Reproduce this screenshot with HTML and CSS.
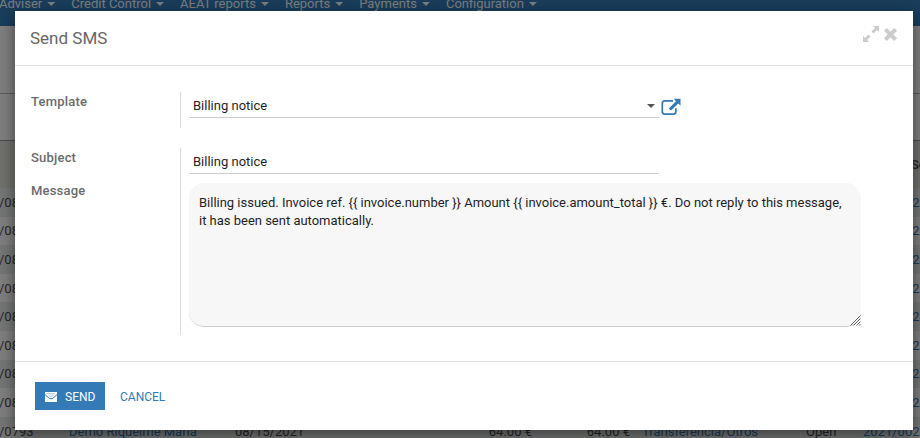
FILE: index.html
```html
<!DOCTYPE html>
<html lang="en">
<head>
<meta charset="utf-8">
<title>Send SMS</title>
<link rel="stylesheet" href="styles.css">
</head>
<body>
<div class="page">
  <nav class="navbar">
    <a>Adviser</a><a>Credit Control</a><a>AEAT reports</a><a>Reports</a><a>Payments</a><a>Configuration</a>
  </nav>
  <div class="control-panel"></div>
  <div class="filters"></div>
  <div class="list">
    <div class="row head"><span class="source">Se</span></div>
    <div class="row"><span>/08</span><span class="number">2021/002</span></div>
    <div class="row"><span>/08</span><span class="number">2021/002</span></div>
    <div class="row"><span>/08</span><span class="number">2021/002</span></div>
    <div class="row"><span>/08</span><span class="number">2021/002</span></div>
    <div class="row"><span>/08</span><span class="number">2021/002</span></div>
    <div class="row"><span>/08</span><span class="number">2021/002</span></div>
    <div class="row"><span>/08</span><span class="number">2021/002</span></div>
    <div class="row"><span>/08</span><span class="number">2021/002</span></div>
    <div class="row"><span>/0793</span><span class="partner">Demo Riquelme María</span><span class="date">08/15/2021</span><span class="amount">64.00 €</span><span class="due">64.00 €</span><span class="mode">Transferencia/Otros</span><span class="state">Open</span><span class="number">2021/002</span></div>
  </div>
</div>
<div class="backdrop">
  <div class="modal">
    <header class="modal-header">
      <h4>Send SMS</h4>
      <svg class="expand" viewBox="0 0 16 16"><path d="M10 0H16v6l-2-2-3.500 3.500-2-2L12 2zM6 16H0V10l2 2 3.500-3.500 2 2L4 14z"/></svg>
      <svg class="close" viewBox="0 0 12 12"><path d="M2.600 2.600l6.800 6.800M9.400 2.600L2.600 9.400"/></svg>
    </header>
    <main class="modal-body">
      <div class="group">
        <div class="labels"><label>Template</label></div>
        <div class="fields first">
          <div class="select"><div class="input">Billing notice<i class="caret"></i></div>
          <svg class="external" viewBox="0 0 20 18"><path class="frame" d="M12 2.900H3.800Q1.300 2.900 1.300 5.400v8.200q0 2.500 2.500 2.500h8.600q2.500 0 2.500-2.500v-3.400"/><path class="arrow" d="M12.600.8H19.500v6.900l-2.200-2.200-7.300 7.100-2.200-2.200 7.200-7.200z"/></svg></div>
        </div>
      </div>
      <div class="group second">
        <div class="labels"><label>Subject</label><label>Message</label></div>
        <div class="fields">
          <div class="input">Billing notice</div>
          <div class="message">
            <textarea spellcheck="false">Billing issued. Invoice ref. {{ invoice.number }} Amount {{ invoice.amount_total }} €. Do not reply to this message, it has been sent automatically.</textarea>
            <svg class="grip" viewBox="0 0 11 11"><path d="M.5 10.500l10-10M3.500 10.500l7-7M6.500 10.500l4-4M9 10.500L10.500 9"/></svg>
          </div>
        </div>
      </div>
    </main>
    <footer class="modal-footer">
      <button class="send"><svg viewBox="0 0 12 10"><path class="env" d="M0 0h12v10H0z"/><path class="fold" d="M0 2.500L4 6.200q2 1.300 4 0L12 2.500"/><path class="lines" d="M1.500 1.500h9M3 3h6M4.500 4.500h3"/></svg><span>SEND</span></button>
      <button class="cancel"><span>CANCEL</span></button>
    </footer>
  </div>
</div>
</body>
</html>
```
FILE: styles.css
```css
* { box-sizing: border-box; }
body { margin: 0; height: 438px; overflow: hidden; font: 13px/18px Roboto, sans-serif; color: #4c4c4c; }
.page { height: 438px; overflow: hidden; background: #fff; }
.navbar { height: 26px; display: flex; background: #337ab7; color: #fff; line-height: 18px; }
.navbar a { display: flex; gap: 5px; margin: -5px 16px 0 -1px; height: 18px; white-space: nowrap; opacity: .95; }
.navbar a + a { margin-left: 0; }
.navbar a::after { content: ""; margin-top: 7px; width: 8px; height: 4px; background: currentColor; clip-path: polygon(0 0, 100% 0, 50% 100%); }
.control-panel { height: 68px; border-bottom: 1px solid #bbb; }
.filters { height: 47px; border-bottom: 1px solid #999; }
.row { display: grid; grid-template-columns: 70px 166px 199px 98px 98px 12px 164px 57px 57px; margin-left: -1px; height: 28.6px; padding-top: 1px; align-items: center; white-space: nowrap; }
.row:nth-child(even) { background: #ebefed; }
.row span:first-child { grid-column: 1; }
.row.head { height: 47px; background: #e0e0da; font-weight: 500; }
.row .source.source { grid-column: 9; padding-left: 48px; }
.partner { grid-column: 2; color: #337ab7; }
.date { grid-column: 3; }
.amount { grid-column: 4; text-align: right; }
.due { grid-column: 5; text-align: right; }
.mode { grid-column: 7; color: #337ab7; }
.state { grid-column: 8; }
.number { grid-column: 9; color: #337ab7; }
.backdrop { position: absolute; inset: 0; padding: 11px 7px 8px 15px; background: rgba(0,0,0,.5); }
.modal { height: 419px; display: flex; flex-direction: column; background: #fff; box-shadow: 0 5px 15px rgba(0,0,0,.5); }
.modal-header { height: 55px; padding: 0 15px; display: flex; border-bottom: 1px solid #e3e3e3; }
h4 { margin: 17px auto 0 0; font-size: 17px; font-weight: 400; line-height: 20px; color: #666; }
.expand { width: 16px; height: 16px; margin: 15px 5px 0 0; fill: #ccc; }
.close { width: 13px; height: 13px; margin: 17px 1px 0 0; fill: none; stroke: #ccc; stroke-width: 3.7; stroke-linecap: square; }
.modal-body { flex: 1; padding: 26px 16px 0; }
.group { display: flex; }
.second { margin-top: 20px; }
.labels { width: 149px; padding-top: 1px; display: flex; flex-direction: column; gap: 15px; }
label { font-weight: 500; letter-spacing: .2px; color: #6b6b6b; }
.fields { width: 681px; height: 187px; border-left: 1px solid #ddd; padding-left: 8px; color: #1f1f1f; }
.fields.first { height: 36px; }
.select { display: flex; }
.input { width: 470px; height: 26px; padding: 5px 4px 0; border-bottom: 1px solid #ccc; display: flex; justify-content: space-between; }
.caret { width: 8px; height: 4px; margin-top: 7px; background: #555; clip-path: polygon(0 0, 100% 0, 50% 100%); }
.external { width: 20px; height: 18px; margin: 6px 0 0 2px; }
.frame { fill: none; stroke: #337ab7; stroke-width: 1.7; }
.arrow { fill: #337ab7; }
.message { position: relative; width: 672px; margin-top: 9px; }
textarea { display: block; width: 672px; height: 144px; padding: 11px 10px; border: 0; border-bottom: 1px solid #ccc; border-radius: 15px; background: #f7f7f7; font: inherit; letter-spacing: -.01px; color: inherit; outline: 0; resize: none; }
.grip { position: absolute; right: 0; bottom: 1px; width: 11px; height: 11px; fill: none; stroke: #555; stroke-width: .9; }
.modal-footer { height: 69px; border-top: 1px solid #e3e3e3; padding: 20px; display: flex; gap: 15px; }
button { height: 28px; padding: 0; border: 0; background: none; font: 12px/28px Roboto, sans-serif; color: #337ab7; display: flex; align-items: center; }
button span { padding-top: 2px; line-height: 26px; }
.send { width: 70px; padding-left: 10px; gap: 8px; background: #337ab7; color: #fff; }
.send svg { width: 12px; height: 10px; margin-top: 2px; }
.env { fill: #fff; }
.fold, .lines { fill: none; stroke: #337ab7; stroke-width: 1; }
.lines { opacity: .5; stroke-width: .7; }
```
